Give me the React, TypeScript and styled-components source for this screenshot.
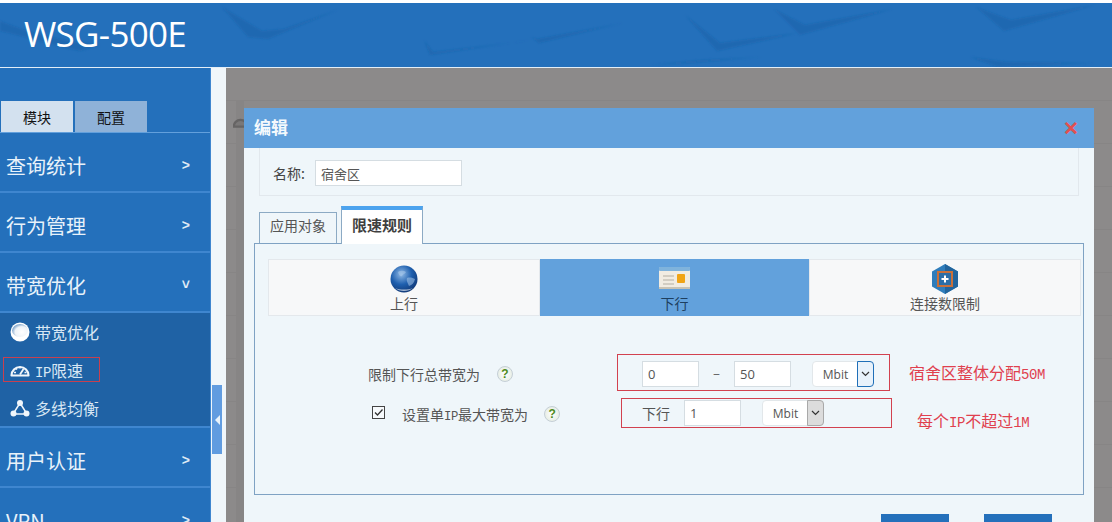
import styled, { createGlobalStyle } from "styled-components";

const CJK = `"Noto Sans CJK SC", "Noto Sans", sans-serif`;

const GlobalStyle = createGlobalStyle`
  html, body {
    margin: 0;
    padding: 0;
    background: #ffffff;
  }
  * {
    box-sizing: border-box;
  }
`;

const Page = styled.div`
  width: 1112px;
  height: 522px;
  overflow: hidden;
  padding-top: 3px;
  display: flex;
  flex-direction: column;
  font-family: ${CJK};
  background: #ffffff;
`;

const Header = styled.header`
  position: relative;
  flex: none;
  height: 65px;
  padding: 9px 0 0 24px;
  background: #2470bb;
  border-bottom: 1px solid #e3eef7;
  overflow: hidden;
`;

const HeaderTexture = styled.svg`
  position: absolute;
  left: 0;
  top: 0;
`;

const Title = styled.h1`
  position: relative;
  margin: 0;
  font-family: "Open Sans", "Liberation Sans", sans-serif;
  font-size: 35px;
  font-weight: 400;
  line-height: 44px;
  letter-spacing: -0.7px;
  color: #ffffff;
`;

const Body = styled.div`
  flex: 1;
  min-height: 0;
  display: flex;
`;

const Sidebar = styled.nav`
  flex: none;
  width: 211px;
  padding-top: 33px;
  background: #2470bb;
  border-right: 1px solid #3f86cf;
`;

const ModeTabs = styled.div`
  display: flex;
  gap: 2px;
  padding-left: 1px;
  height: 32px;
  border-bottom: 1px solid #63a0dc;
`;

const ModeTab = styled.div<{ $active?: boolean }>`
  width: 72px;
  height: 31px;
  display: flex;
  align-items: center;
  justify-content: center;
  font-size: 14px;
  color: #111111;
  background: ${(p) => (p.$active ? "#d3e1ef" : "#8fb2d8")};
`;

const MenuItem = styled.div`
  height: 60px;
  padding: 6px 20px 0 6px;
  display: flex;
  align-items: center;
  justify-content: space-between;
  font-size: 20px;
  color: #e8f2fa;
  border-bottom: 2px solid #3f86cf;
`;

const Chevron = styled.span`
  font-family: "Liberation Sans", sans-serif;
  font-size: 14px;
  font-weight: 700;
  color: #dfeaf5;
`;

const SubMenu = styled.div`
  height: 115px;
  background: #1f62a5;
  border-bottom: 2px solid #3f86cf;
`;

const SubItem = styled.div`
  position: relative;
  height: 38px;
  display: flex;
  align-items: center;
  gap: 5px;
  padding-left: 10px;
  font-size: 16px;
  color: #d8e7f4;
`;

const SubMark = styled.span`
  position: absolute;
  left: 3px;
  top: 6px;
  width: 97px;
  height: 25px;
  border: 1px solid #c8404f;
`;

const Mono = styled.span`
  font-family: "Liberation Mono", monospace;
  font-size: 0.875em;
  letter-spacing: -0.025em;
`;

const Splitter = styled.div`
  flex: none;
  width: 15px;
  padding: 317px 0 0 1px;
  background: #f0f6fa;
`;

const SplitterHandle = styled.div`
  width: 10px;
  height: 69px;
  display: flex;
  align-items: center;
  justify-content: center;
  background: #619ce0;
  &::before {
    content: "";
    border-style: solid;
    border-width: 5px 5px 5px 0;
    border-color: transparent #e8f2fa transparent transparent;
  }
`;

const Main = styled.main`
  position: relative;
  flex: 1;
  padding: 40px 18px 0;
  background-color: #8c8a8a;
  background-image:
    linear-gradient(90deg, transparent 10px, #878585 10px, #878585 18px, transparent 18px),
    linear-gradient(#878585 1px, transparent 1px);
  background-position: 0 32px, 0 32px;
  background-size: 100% 100%, 100% 43px;
  background-repeat: no-repeat, repeat;
`;

const GhostIcon = styled.svg`
  position: absolute;
  left: 7px;
  top: 49px;
`;

const Modal = styled.section`
  position: relative;
  height: 420px;
  background: #eff6fa;
`;

const ModalHead = styled.div`
  height: 40px;
  padding: 0 15px 3px 10px;
  display: flex;
  align-items: center;
  justify-content: space-between;
  background: #62a1dc;
  font-size: 17px;
  font-weight: 700;
  color: #f4f9fd;
`;

const CloseMark = styled.span`
  margin-top: 3px;
  font-family: "Liberation Sans", sans-serif;
  font-size: 19px;
  font-weight: 700;
  color: #e2504f;
`;

const NameBox = styled.div`
  height: 48px;
  margin: 0 15px;
  padding: 12px 0 0 13px;
  display: flex;
  align-items: flex-start;
  border: 1px solid #e2e8ed;
  border-top: none;
  font-size: 14px;
  color: #444444;
`;

const NameLabel = styled.span`
  width: 42px;
  line-height: 26px;
`;

const TextBox = styled.div<{ $w: number; $ml?: number }>`
  width: ${(p) => p.$w}px;
  height: 26px;
  margin-left: ${(p) => p.$ml ?? 0}px;
  padding-left: 5px;
  display: flex;
  align-items: center;
  background: #ffffff;
  border: 1px solid #d5dde2;
  font-family: "Open Sans", ${CJK};
  font-size: 13px;
  color: #555555;
`;

const TabRow = styled.div`
  height: 37px;
  margin: 10px 0 0 15px;
  display: flex;
  align-items: flex-end;
  gap: 4px;
  position: relative;
  z-index: 1;
`;

const Tab = styled.div<{ $active?: boolean }>`
  width: ${(p) => (p.$active ? 82 : 78)}px;
  height: ${(p) => (p.$active ? 38 : 31)}px;
  margin-bottom: ${(p) => (p.$active ? -1 : 0)}px;
  padding-bottom: ${(p) => (p.$active ? 5 : 6)}px;
  display: flex;
  align-items: center;
  justify-content: center;
  font-size: ${(p) => (p.$active ? 15 : 14)}px;
  font-weight: ${(p) => (p.$active ? 700 : 400)};
  color: ${(p) => (p.$active ? "#3f3f3f" : "#555555")};
  background: ${(p) => (p.$active ? "#ffffff" : "#eff6fa")};
  border: 1px solid #8caac4;
  border-bottom: none;
  border-top: ${(p) => (p.$active ? "4px solid #4ca3ee" : "1px solid #8caac4")};
`;

const Panel = styled.div`
  height: 252px;
  margin: 0 10px;
  padding: 15px 2px 0 13px;
  border: 1px solid #7fa2c3;
`;

const Strip = styled.div`
  height: 57px;
  display: grid;
  grid-template-columns: 272px 269px 272px;
`;

const StripCell = styled.div<{ $active?: boolean }>`
  display: flex;
  flex-direction: column;
  align-items: center;
  padding-top: 4px;
  font-size: 14px;
  line-height: 20px;
  color: ${(p) => (p.$active ? "#1e3f5f" : "#555555")};
  background: ${(p) => (p.$active ? "#62a1dc" : "#f7f8f9")};
  border: 1px solid ${(p) => (p.$active ? "#62a1dc" : "#e4e8ec")};
`;

const IconSlot = styled.div`
  height: 29px;
  display: flex;
  align-items: center;
  justify-content: center;
`;

const Rows = styled.div`
  margin-top: 38px;
  display: flex;
  flex-direction: column;
  gap: 7px;
`;

const Row = styled.div`
  display: flex;
  align-items: flex-start;
  font-size: 14px;
  color: #555555;
`;

const RowLabel = styled.div<{ $w: number; $pad: number; $mt: number }>`
  flex: none;
  width: ${(p) => p.$w}px;
  height: 20px;
  margin-top: ${(p) => p.$mt}px;
  padding-left: ${(p) => p.$pad}px;
  display: flex;
  align-items: center;
`;

const Help = styled.span<{ $ml: number }>`
  width: 16px;
  height: 16px;
  margin-left: ${(p) => p.$ml}px;
  display: flex;
  align-items: center;
  justify-content: center;
  border-radius: 50%;
  border: 1px solid #c5cfd6;
  background: radial-gradient(circle, #ffffff, #dfe8dc);
  font-family: "Liberation Sans", sans-serif;
  font-size: 12px;
  font-weight: 700;
  color: #4e8a1c;
`;

const Check = styled.span`
  width: 13px;
  height: 13px;
  margin: -4px 17px 0 0;
  border: 1px solid #444444;
  display: flex;
  align-items: center;
  justify-content: center;
  background: #f7fafc;
`;

const RedBox = styled.div<{ $w: number; $h: number; $pad: number; $pt?: number }>`
  flex: none;
  width: ${(p) => p.$w}px;
  height: ${(p) => p.$h}px;
  padding-left: ${(p) => p.$pad}px;
  padding-top: ${(p) => p.$pt ?? 0}px;
  display: flex;
  align-items: center;
  border: 1px solid #d2414f;
`;

const Dash = styled.span`
  width: 35px;
  padding-bottom: 3px;
  text-align: center;
  font-size: 13px;
  color: #555555;
`;

const Select = styled.div<{ $ml: number }>`
  width: 62px;
  height: 26px;
  margin-left: ${(p) => p.$ml}px;
  display: flex;
  align-items: stretch;
  background: #ffffff;
  border: 1px solid #e2e7ea;
  border-radius: 4px;
  font-family: "Open Sans", "Liberation Sans", sans-serif;
  font-size: 12px;
  color: #555555;
`;

const SelectText = styled.span`
  flex: 1;
  display: flex;
  align-items: center;
  justify-content: center;
`;

const SelectArrow = styled.span<{ $focus?: boolean }>`
  width: 17px;
  display: flex;
  align-items: center;
  justify-content: center;
  margin: -1px;
  border-radius: 0 4px 4px 0;
  background: ${(p) => (p.$focus ? "#e8f2fb" : "#dcdcdc")};
  border: 1px solid ${(p) => (p.$focus ? "#1f6fb8" : "#a9a9a9")};
`;

const Note = styled.span<{ $ml: number; $mt: number }>`
  margin-left: ${(p) => p.$ml}px;
  margin-top: ${(p) => p.$mt}px;
  font-size: 16px;
  line-height: 20px;
  color: #e0404e;
`;

const Footer = styled.div`
  height: 30px;
  margin: 19px 42px 0 0;
  display: flex;
  justify-content: flex-end;
  gap: 35px;
`;

const FooterButton = styled.div`
  width: 68px;
  background: #2470bb;
`;

const Ball = () => (
  <svg width="28" height="28" viewBox="0 0 28 28">
    <defs>
      <radialGradient id="ball" cx="40%" cy="32%" r="70%">
        <stop offset="0" stopColor="#8fb9e6" />
        <stop offset="0.55" stopColor="#1e5fae" />
        <stop offset="1" stopColor="#123a78" />
      </radialGradient>
    </defs>
    <circle cx="14" cy="14" r="13.5" fill="url(#ball)" />
    <path d="M8 7c3-2 6-1 8 0-1 2-3 2-4 4-2 1-3-1-4-4zM17 13c3-1 6 0 8 1-1 4-3 6-6 7-1-3-3-5-2-8z" fill="#a9c8ea" opacity="0.55" />
    <path d="M5 23c5 4 13 4 18 0-5 2-13 2-18 0z" fill="#c9d6e6" opacity="0.8" />
  </svg>
);

const Card = () => (
  <svg width="31" height="23" viewBox="0 0 31 23">
    <rect x="0" y="0" width="31" height="22" rx="2" fill="#f1ece2" />
    <rect x="0" y="0" width="31" height="4" rx="1" fill="#7fb3dc" />
    <rect x="0" y="20" width="31" height="2" fill="#c9c3b4" />
    <path d="M4 9h11M4 13h11M4 17h11" stroke="#b3aea2" strokeWidth="1" />
    <rect x="18" y="7" width="8" height="9" rx="1" fill="#f0a416" />
  </svg>
);

const Hexagon = () => (
  <svg width="26" height="30" viewBox="0 0 26 30">
    <path d="M13 0l13 7.5v15L13 30 0 22.500v-15z" fill="#2f7dbb" />
    <path d="M13 0l13 7.500v15L13 30z" fill="#22649c" />
    <rect x="6" y="8" width="14" height="14" fill="#2a6ea8" stroke="#c8703a" strokeWidth="2" />
    <path d="M13 11.500v7M9.500 15h7" stroke="#ffffff" strokeWidth="2" />
  </svg>
);

const Orb = () => (
  <svg width="20" height="20" viewBox="0 0 20 20">
    <defs>
      <radialGradient id="orb" cx="62%" cy="62%" r="60%">
        <stop offset="0" stopColor="#ffffff" />
        <stop offset="0.7" stopColor="#eef3f8" />
        <stop offset="1" stopColor="#8fb0d2" />
      </radialGradient>
    </defs>
    <circle cx="10" cy="10" r="9.500" fill="#ffffff" />
    <ellipse cx="10" cy="8.500" rx="8" ry="6.500" fill="url(#orb)" />
  </svg>
);

const Gauge = () => (
  <svg width="20" height="14" viewBox="0 0 20 14">
    <path
      d="M1.500 12.500a8.500 8.500 0 1 1 17 0z"
      fill="#1f62a5"
      stroke="#f1f6fb"
      strokeWidth="2.200"
      strokeLinejoin="round"
    />
    <path d="M10 11.500l3.500-5.500" stroke="#f1f6fb" strokeWidth="1.800" />
    <path d="M4 9.500h2M6 5.500l1 1M10 3.500v2M14.500 9.500h2" stroke="#f1f6fb" strokeWidth="1.600" />
  </svg>
);

const Nodes = () => (
  <svg width="20" height="18" viewBox="0 0 20 18">
    <path d="M10 4L3 15h14z" fill="none" stroke="#f1f6fb" strokeWidth="1.500" />
    <circle cx="10" cy="4" r="3" fill="#f1f6fb" />
    <circle cx="3.500" cy="14.500" r="3" fill="#f1f6fb" />
    <circle cx="16.500" cy="14.500" r="3" fill="#f1f6fb" />
  </svg>
);

const ArrowDown = () => (
  <svg width="9" height="6" viewBox="0 0 9 6">
    <path d="M1 1l3.500 3.500L8 1" fill="none" stroke="#333333" strokeWidth="1.200" />
  </svg>
);

const Tick = () => (
  <svg width="11" height="11" viewBox="0 0 11 11">
    <path d="M2 5.500l2.500 2.500L9.500 2.500" fill="none" stroke="#333333" strokeWidth="1.300" />
  </svg>
);

// soft key-cap shadows in the banner, coordinates read off the reference
const keyShadows = [
  "M0 18c30 12 60 20 100 24l-20 6C50 42 20 32 0 28z",
  "M222 4l26 30 20 2 72-30-56 20-22 2z",
  "M424 37l6 15 101-15-12 2-86 10z",
  "M531 34l8 6 84-20-10 2-76 14z",
  "M685 12l32 36 81-18-78 10z",
  "M774 6l26 26 93-26-88 16z",
  "M976 4l28 24 91-26-84 15z",
  "M650 62l40-2 72-6-60 3z",
  "M970 54l28 10 97-4-88-1z",
];

const App = () => {
  return (
    <>
      <GlobalStyle />
      <Page>
        <Header>
          <HeaderTexture width="1112" height="64" viewBox="0 0 1112 64">
            <defs>
              <filter id="soft">
                <feGaussianBlur stdDeviation="1.2" />
              </filter>
            </defs>
            <g fill="#1a5fa4" fillOpacity="0.45" filter="url(#soft)">
              {keyShadows.map((d) => (
                <path key={d} d={d} />
              ))}
            </g>
          </HeaderTexture>
          <Title>WSG-500E</Title>
        </Header>
        <Body>
          <Sidebar>
            <ModeTabs>
              <ModeTab $active>模块</ModeTab>
              <ModeTab>配置</ModeTab>
            </ModeTabs>
            <MenuItem>
              查询统计<Chevron>&gt;</Chevron>
            </MenuItem>
            <MenuItem>
              行为管理<Chevron>&gt;</Chevron>
            </MenuItem>
            <MenuItem>
              带宽优化<Chevron>˅</Chevron>
            </MenuItem>
            <SubMenu>
              <SubItem>
                <Orb />
                带宽优化
              </SubItem>
              <SubItem>
                <SubMark />
                <Gauge />
                <span>
                  <Mono>IP</Mono>限速
                </span>
              </SubItem>
              <SubItem>
                <Nodes />
                多线均衡
              </SubItem>
            </SubMenu>
            <MenuItem>
              用户认证<Chevron>&gt;</Chevron>
            </MenuItem>
            <MenuItem>
              VPN<Chevron>&gt;</Chevron>
            </MenuItem>
          </Sidebar>
          <Splitter>
            <SplitterHandle />
          </Splitter>
          <Main>
            <GhostIcon width="15" height="11" viewBox="0 0 20 14">
              <path d="M1 12.500a9 9 0 1 1 18 0z" fill="#7a7878" stroke="#666464" strokeWidth="3" />
            </GhostIcon>
            <Modal>
              <ModalHead>
                编辑
                <CloseMark>✕</CloseMark>
              </ModalHead>
              <NameBox>
                <NameLabel>名称:</NameLabel>
                <TextBox $w={147}>宿舍区</TextBox>
              </NameBox>
              <TabRow>
                <Tab>应用对象</Tab>
                <Tab $active>限速规则</Tab>
              </TabRow>
              <Panel>
                <Strip>
                  <StripCell>
                    <IconSlot>
                      <Ball />
                    </IconSlot>
                    上行
                  </StripCell>
                  <StripCell $active>
                    <IconSlot>
                      <Card />
                    </IconSlot>
                    下行
                  </StripCell>
                  <StripCell>
                    <IconSlot>
                      <Hexagon />
                    </IconSlot>
                    连接数限制
                  </StripCell>
                </Strip>
                <Rows>
                  <Row>
                    <RowLabel $w={349} $pad={100} $mt={10}>
                      限制下行总带宽为
                      <Help $ml={17}>?</Help>
                    </RowLabel>
                    <RedBox $w={273} $h={37} $pad={24} $pt={3}>
                      <TextBox $w={57}>0</TextBox>
                      <Dash>–</Dash>
                      <TextBox $w={57}>50</TextBox>
                      <Select $ml={21}>
                        <SelectText>Mbit</SelectText>
                        <SelectArrow $focus>
                          <ArrowDown />
                        </SelectArrow>
                      </Select>
                    </RedBox>
                    <Note $ml={19} $mt={8}>
                      宿舍区整体分配<Mono>50M</Mono>
                    </Note>
                  </Row>
                  <Row>
                    <RowLabel $w={353} $pad={104} $mt={6}>
                      <Check>
                        <Tick />
                      </Check>
                      <span>
                        设置单<Mono>IP</Mono>最大带宽为
                      </span>
                      <Help $ml={16}>?</Help>
                    </RowLabel>
                    <RedBox $w={271} $h={30} $pad={20}>
                      下行
                      <TextBox $w={57} $ml={14}>
                        1
                      </TextBox>
                      <Select $ml={21}>
                        <SelectText>Mbit</SelectText>
                        <SelectArrow>
                          <ArrowDown />
                        </SelectArrow>
                      </Select>
                    </RedBox>
                    <Note $ml={25} $mt={12}>
                      每个<Mono>IP</Mono>不超过<Mono>1M</Mono>
                    </Note>
                  </Row>
                </Rows>
              </Panel>
              <Footer>
                <FooterButton />
                <FooterButton />
              </Footer>
            </Modal>
          </Main>
        </Body>
      </Page>
    </>
  );
};

export default App;
